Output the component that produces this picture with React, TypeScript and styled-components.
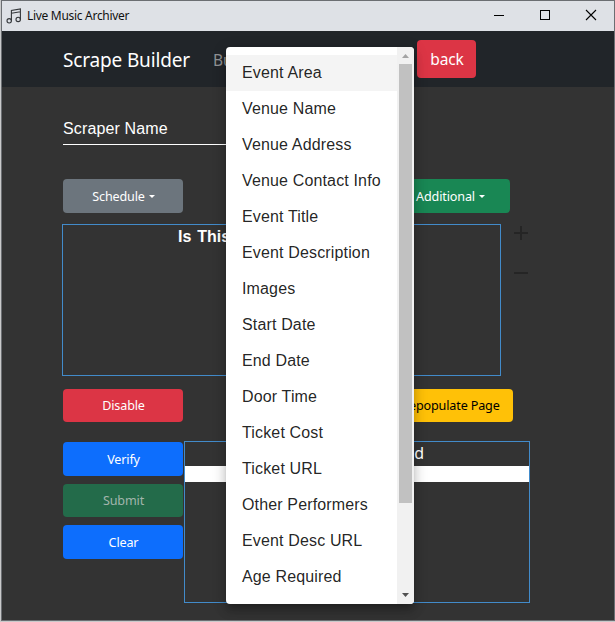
import React from "react";
import styled, { createGlobalStyle } from "styled-components";

const GlobalStyle = createGlobalStyle`
  * { box-sizing: border-box; }
  body { margin: 0; background: #c9cacb; overflow: hidden; }
`;

const ui = `"Noto Sans", "Open Sans", sans-serif`;
const arial = `"Liberation Sans", Arial, sans-serif`;

const Desktop = styled.div`
  width: 615px;
  height: 622px;
  padding: 0 0 1px 1px;
  background: #c9cacb;
`;

const Window = styled.div`
  position: relative;
  width: 614px;
  height: 621px;
  border: 1px solid #6b6e72;
  background: #333;
  color: #fff;
  font-family: ${ui};
`;

const TitleBar = styled.header`
  display: flex;
  align-items: center;
  height: 30px;
  padding-left: 4px;
  background: #dee1e6;
  color: #111;
`;

const WindowTitle = styled.span`
  flex: 1;
  margin-left: 5px;
  font-size: 12px;
  letter-spacing: -0.3px;
  line-height: 30px;
`;

const Controls = styled.div`
  display: flex;
  svg { display: block; }
`;

const Navbar = styled.nav`
  display: flex;
  align-items: center;
  height: 56px;
  padding-left: 61px;
  background: #212529;
`;

const Brand = styled.span`
  width: 150px;
  padding-top: 2px;
  font-size: 19px;
  letter-spacing: -0.16px;
  white-space: nowrap;
`;

const NavLink = styled.span`
  width: 204px;
  padding-top: 1px;
  font-size: 15.5px;
  color: #909294;
`;

const Button = styled.button<{ $bg: string; $color?: string; $w?: number; $h?: number }>`
  display: flex;
  align-items: center;
  justify-content: center;
  flex: none;
  width: ${(p) => p.$w ?? 120}px;
  height: ${(p) => p.$h ?? 34}px;
  padding: 0 0 0 1px;
  border: 0;
  border-radius: 4px;
  background: ${(p) => p.$bg};
  color: ${(p) => p.$color ?? "#fff"};
  font-family: ${ui};
  font-size: 12.6px;
  letter-spacing: -0.15px;
  white-space: nowrap;
`;

const BackButton = styled(Button)`
  font-size: 15.5px;
  letter-spacing: -0.1px;
`;

const RepopulateButton = styled(Button)`
  padding: 0 1px 0 0;
`;

const Caret = styled.span`
  margin-left: 4px;
  border: 3px solid transparent;
  border-top-color: currentColor;
  border-bottom: 0;
`;

const Content = styled.main`
  padding-left: 60px;
`;

const NameField = styled.div`
  width: 240px;
  height: 58px;
  margin-left: 1px;
  padding-top: 32px;
  border-bottom: 1px solid #fff;
  font: 16px/19px ${arial};
  letter-spacing: 0.13px;
`;

const Row = styled.div<{ $top: number; $w: number }>`
  display: flex;
  justify-content: space-between;
  width: ${(p) => p.$w}px;
  margin: ${(p) => p.$top}px 0 0 1px;
`;

const QuestionRow = styled.div`
  display: flex;
  margin-top: 11px;
`;

const QuestionBox = styled.div`
  width: 439px;
  height: 152px;
  padding: 2px 0 0 115px;
  border: 1px solid #428bca;
  font: bold 16px/19px ${arial};
  word-spacing: 1.5px;
`;

const Steppers = styled.div`
  display: flex;
  flex-direction: column;
  gap: 26px;
  margin: 2px 0 0 13px;
  svg { display: block; }
`;

const ResultRow = styled.div`
  display: flex;
  margin: 19px 0 0 1px;
`;

const Actions = styled.div`
  display: flex;
  flex-direction: column;
  width: 121px;
  padding-top: 1px;
  gap: 8px;
`;

const ResultBox = styled.div`
  width: 346px;
  height: 162px;
  border: 1px solid #428bca;
`;

const ResultHead = styled.div`
  height: 24px;
  padding-right: 105px;
  text-align: right;
  font-size: 16px;
  line-height: 23px;
`;

const ResultInput = styled.div`
  height: 16px;
  background: #fff;
`;

const Menu = styled.div`
  position: absolute;
  left: 224px;
  top: 46px;
  display: flex;
  width: 188px;
  height: 557px;
  border-radius: 4px;
  overflow: hidden;
  background: #fff;
  color: rgba(0, 0, 0, 0.87);
  box-shadow: 0 5px 5px -3px rgba(0, 0, 0, 0.2), 0 8px 10px 1px rgba(0, 0, 0, 0.14),
    0 3px 14px 2px rgba(0, 0, 0, 0.12);
`;

const MenuList = styled.ul`
  flex: 1;
  margin: 0;
  padding: 8px 0 0;
  list-style: none;
`;

const MenuItem = styled.li<{ $active: boolean }>`
  height: 36px;
  padding-left: 16px;
  background: ${(p) => (p.$active ? "#f4f4f4" : "#fff")};
  font: 16px/35px ${arial};
  letter-spacing: 0.15px;
  white-space: nowrap;
`;

const Scrollbar = styled.div`
  display: flex;
  flex-direction: column;
  justify-content: space-between;
  width: 17px;
  background: #f1f1f1;
  svg { display: block; }
`;

const Thumb = styled.div`
  width: 13px;
  height: 439px;
  margin: 0 2px 84px;
  background: #c1c1c1;
`;

const items = [
  "Event Area", "Venue Name", "Venue Address", "Venue Contact Info", "Event Title",
  "Event Description", "Images", "Start Date", "End Date", "Door Time", "Ticket Cost",
  "Ticket URL", "Other Performers", "Event Desc URL", "Age Required",
];

const MusicIcon = () => (
  <svg width="16" height="16" viewBox="0 0 16 16" fill="none" stroke="#34373a" strokeWidth="1.1">
    <circle cx="3.2" cy="12.8" r="2.2" />
    <circle cx="12.2" cy="11.4" r="2.2" />
    <path d="M5.4 12.8V2.5L14.4 1v10.4M5.4 5.2l9-1.5" />
  </svg>
);

export default function App() {
  return (
    <Desktop>
      <GlobalStyle />
      <Window>
        <TitleBar>
          <MusicIcon />
          <WindowTitle>Live Music Archiver</WindowTitle>
          <Controls>
            <svg width="138" height="30" fill="none" stroke="#000" shapeRendering="crispEdges">
              <path d="M18 14.5h10" />
              <rect x="64.5" y="9.5" width="9" height="9" />
              <path d="M110 9l10 10M120 9l-10 10" shapeRendering="auto" strokeWidth="1.1" />
            </svg>
          </Controls>
        </TitleBar>
        <Navbar>
          <Brand>Scrape Builder</Brand>
          <NavLink>Builder</NavLink>
          <BackButton $bg="#dc3545" $w={59} $h={38}>back</BackButton>
        </Navbar>
        <Content>
          <NameField>Scraper Name</NameField>
          <Row $top={34} $w={447}>
            <Button $bg="#6c757d">Schedule<Caret /></Button>
            <Button $bg="#198754">Additional<Caret /></Button>
          </Row>
          <QuestionRow>
            <QuestionBox>Is This</QuestionBox>
            <Steppers>
              <svg width="14" height="14" stroke="#252525" strokeWidth="2"><path d="M0 7h14M7 0v14" /></svg>
              <svg width="14" height="14" stroke="#252525" strokeWidth="2"><path d="M0 7h14" /></svg>
            </Steppers>
          </QuestionRow>
          <Row $top={13} $w={450}>
            <Button $bg="#dc3545" $h={33}>Disable</Button>
            <RepopulateButton $bg="#ffc107" $color="#000" $w={124} $h={33}>Repopulate Page</RepopulateButton>
          </Row>
          <ResultRow>
            <Actions>
              <Button $bg="#0d6efd">Verify</Button>
              <Button $bg="#236b4a" $color="#a2b5ac" $h={33}>Submit</Button>
              <Button $bg="#0d6efd">Clear</Button>
            </Actions>
            <ResultBox>
              <ResultHead>Scraped</ResultHead>
              <ResultInput />
            </ResultBox>
          </ResultRow>
        </Content>
        <Menu>
          <MenuList>
            {items.map((label, i) => (
              <MenuItem key={label} $active={i === 0}>{label}</MenuItem>
            ))}
          </MenuList>
          <Scrollbar>
            <svg width="17" height="17"><path d="M5 11h7L8.500 7z" fill="#a3a3a3" /></svg>
            <Thumb />
            <svg width="17" height="17"><path d="M5 6h7L8.500 10z" fill="#505050" /></svg>
          </Scrollbar>
        </Menu>
      </Window>
    </Desktop>
  );
}
